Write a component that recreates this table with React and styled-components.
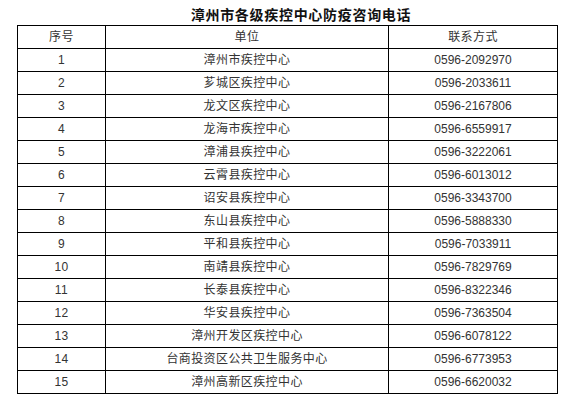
import React from "react";
import styled, { createGlobalStyle } from "styled-components";

const rows = [
  ["1", "漳州市疾控中心", "0596-2092970"],
  ["2", "芗城区疾控中心", "0596-2033611"],
  ["3", "龙文区疾控中心", "0596-2167806"],
  ["4", "龙海市疾控中心", "0596-6559917"],
  ["5", "漳浦县疾控中心", "0596-3222061"],
  ["6", "云霄县疾控中心", "0596-6013012"],
  ["7", "诏安县疾控中心", "0596-3343700"],
  ["8", "东山县疾控中心", "0596-5888330"],
  ["9", "平和县疾控中心", "0596-7033911"],
  ["10", "南靖县疾控中心", "0596-7829769"],
  ["11", "长泰县疾控中心", "0596-8322346"],
  ["12", "华安县疾控中心", "0596-7363504"],
  ["13", "漳州开发区疾控中心", "0596-6078122"],
  ["14", "台商投资区公共卫生服务中心", "0596-6773953"],
  ["15", "漳州高新区疾控中心", "0596-6620032"],
];

const GlobalStyle = createGlobalStyle`
  body {
    margin: 0;
    background: #ffffff;
    font-family: "Liberation Sans", "Noto Sans CJK SC", sans-serif;
  }
`;

const Page = styled.div`
  padding: 3px 0 0 17px;
  width: 540px;
`;

const Title = styled.h3`
  margin: 0;
  height: 22px;
  line-height: 22px;
  text-align: center;
  text-indent: 2em;
  font-size: 14px;
  font-weight: bold;
  letter-spacing: 0.7px;
  color: #111;
  font-family: "Noto Sans CJK SC", sans-serif;
`;

const Table = styled.table`
  width: 540px;
  border-collapse: collapse;
  table-layout: fixed;
`;

const Cell = styled.td`
  height: 22px;
  padding: 0;
  border: 1px solid #000;
  text-align: center;
  vertical-align: middle;
  font-size: 12px;
  color: #333;
  letter-spacing: ${({ $phone }) => ($phone ? "0" : "0.4px")};
  line-height: 16px;
`;

const App = () => (
  <>
    <GlobalStyle />
    <Page>
      <Title>漳州市各级疾控中心防疫咨询电话</Title>
      <Table>
        <colgroup>
          <col style={{ width: 88 }} />
          <col style={{ width: 283 }} />
          <col style={{ width: 169 }} />
        </colgroup>
        <tbody>
          <tr>
            <Cell>序号</Cell>
            <Cell>单位</Cell>
            <Cell>联系方式</Cell>
          </tr>
          {rows.map(([no, name, phone]) => (
            <tr key={no}>
              <Cell>{no}</Cell>
              <Cell>{name}</Cell>
              <Cell $phone>{phone}</Cell>
            </tr>
          ))}
        </tbody>
      </Table>
    </Page>
  </>
);

export default App;
